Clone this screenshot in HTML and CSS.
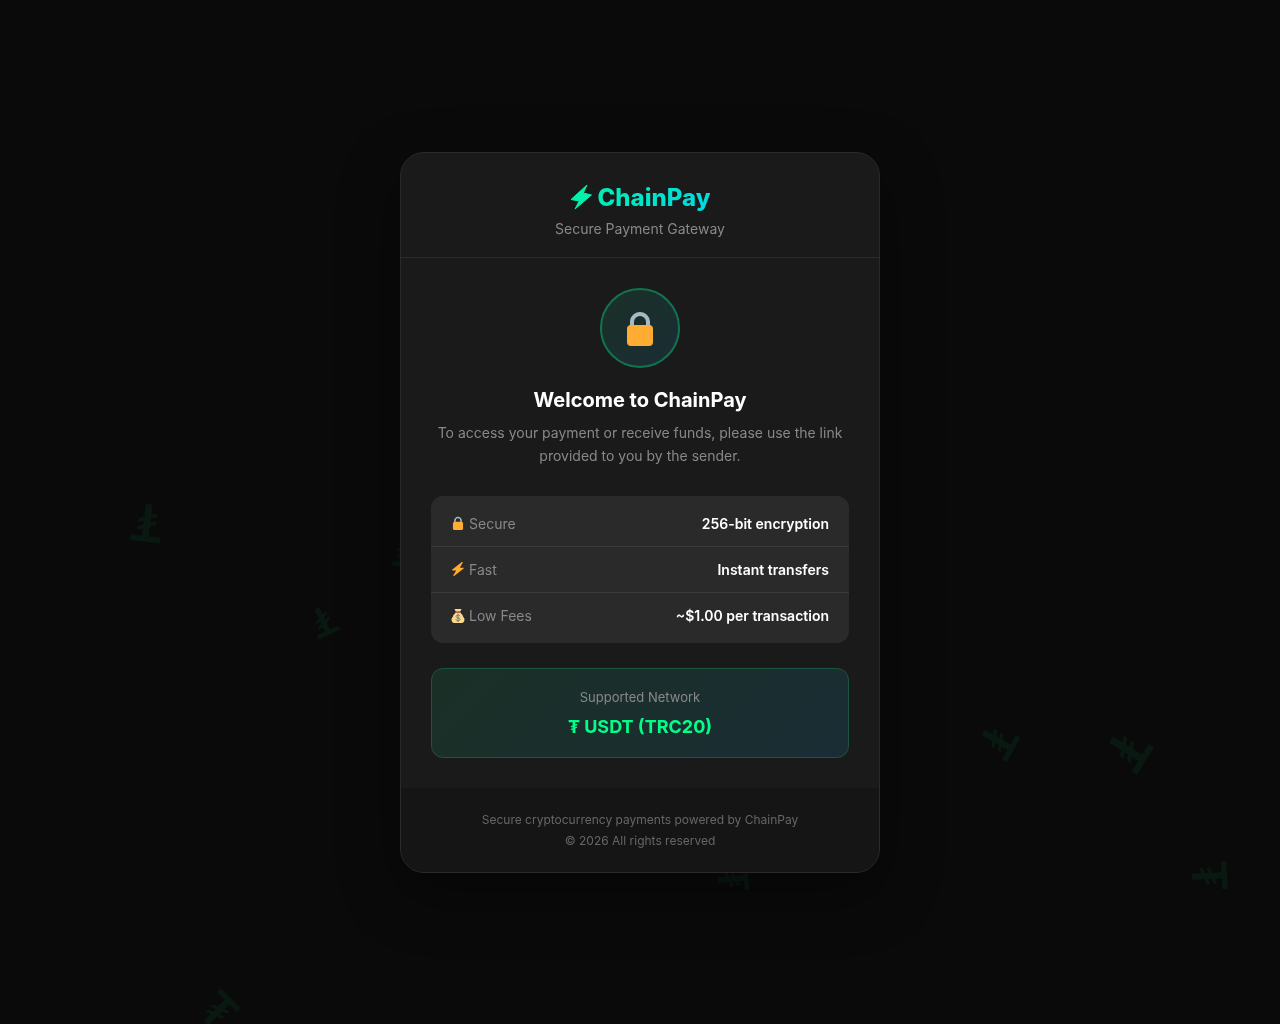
FILE: index.html
```html
<!DOCTYPE html>
<html lang="en">
<head>
    <meta charset="UTF-8">
    <meta name="viewport" content="width=device-width, initial-scale=1.0">
    <title>ChainPay - Secure Payment Gateway</title>
    <link rel="stylesheet" href="styles.css">
</head>
<body>
    <!-- Floating coins -->
    <div class="background" aria-hidden="true">
        <span class="coin coin-1">₮</span>
        <span class="coin coin-2">₮</span>
        <span class="coin coin-3">₮</span>
        <span class="coin coin-4">₮</span>
        <span class="coin coin-5">₮</span>
        <span class="coin coin-6">₮</span>
        <span class="coin coin-7">₮</span>
        <span class="coin coin-8">₮</span>
    </div>

    <!-- Shared icons -->
    <svg class="sprite" aria-hidden="true">
        <symbol id="lock" viewBox="0 0 36 36">
            <path fill="#aab8c2" d="M18 2c-5.500 0-10 4.500-10 10v6h4v-6a6 6 0 0 1 12 0v6h4v-6c0-5.500-4.500-10-10-10z"/>
            <path fill="#ffac33" d="M31 32a4 4 0 0 1-4 4H9a4 4 0 0 1-4-4V19a4 4 0 0 1 4-4h18a4 4 0 0 1 4 4z"/>
        </symbol>
        <symbol id="bolt" viewBox="0 0 36 36">
            <path d="M32.900 15.500c-.2-.5-.7-.8-1.200-.8h-9L29.900 2c.3-.6.2-1.300-.3-1.700-.5-.4-1.200-.4-1.700 0L3.500 19.500c-.4.3-.6.9-.4 1.400.2.500.7.800 1.200.8h9L6.100 34c-.3.600-.2 1.300.3 1.700.5.400 1.200.4 1.700 0L32.500 17c.4-.4.6-1 .4-1.500z"/>
        </symbol>
        <symbol id="moneybag" viewBox="0 0 36 36">
            <path fill="#fdd888" d="M31.900 21.500C30.600 16.400 27 12 23.200 9.200H12.800C9 12 5.400 16.400 4.100 21.500 1 23 .5 29 2.500 32c1.600 2.600 4 4 8 4h15c4 0 6.400-1.400 8-4 2-3 1.500-9-1.600-10.500z"/>
            <path fill="#fdd888" d="M13 7L9.500 2c-.6-1 0-2 1.200-2h14.600c1.200 0 1.800 1 1.200 2L23 7z"/>
            <rect fill="#bf6952" x="11" y="6" width="14" height="4" rx="2"/>
            <path fill="none" stroke="#67757f" stroke-width="2.400" stroke-linecap="round" d="M23 18c-1-2-3-2.500-5-2.500-3 0-5 1.500-5 3.700 0 5.300 10.500 2.300 10.500 7.300 0 2.300-2.500 3.500-5.500 3.500-2.800 0-5-1-5.500-3M18 13v19.500"/>
        </symbol>
    </svg>

    <main class="card">
        <header class="header">
            <h1 class="logo">
                <svg class="logo-icon" viewBox="0 0 22 26" aria-hidden="true">
                    <defs>
                        <linearGradient id="logo-gradient" x1="0" y1="0" x2="1" y2="1">
                            <stop offset="0" stop-color="#00f5a0"/>
                            <stop offset="1" stop-color="#00f0b4"/>
                        </linearGradient>
                    </defs>
                    <path fill="url(#logo-gradient)" stroke="url(#logo-gradient)" stroke-linejoin="round" d="M17 1L1 15.500l8.200 1.500L5 25 21.500 11l-8.300-2z"/>
                </svg>
                <span class="logo-text">ChainPay</span>
            </h1>
            <p class="tagline">Secure Payment Gateway</p>
        </header>

        <section class="content">
            <div class="status-icon">
                <svg class="status-lock" aria-hidden="true"><use href="#lock"/></svg>
            </div>
            <h2 class="title">Welcome to ChainPay</h2>
            <p class="message">To access your payment or receive funds, please use the link provided to you by the sender.</p>

            <dl class="info">
                <div class="info-row">
                    <dt class="info-label"><svg class="emoji" aria-hidden="true"><use href="#lock"/></svg>Secure</dt>
                    <dd class="info-value">256-bit encryption</dd>
                </div>
                <div class="info-row">
                    <dt class="info-label"><svg class="emoji emoji-bolt" aria-hidden="true"><use href="#bolt"/></svg>Fast</dt>
                    <dd class="info-value">Instant transfers</dd>
                </div>
                <div class="info-row">
                    <dt class="info-label"><svg class="emoji" aria-hidden="true"><use href="#moneybag"/></svg>Low Fees</dt>
                    <dd class="info-value">~$1.00 per transaction</dd>
                </div>
            </dl>

            <div class="network">
                <p class="network-label">Supported Network</p>
                <p class="network-value">₮ USDT (TRC20)</p>
            </div>
        </section>

        <footer class="footer">
            <p>Secure cryptocurrency payments powered by ChainPay</p>
            <p>© 2026 All rights reserved</p>
        </footer>
    </main>
</body>
</html>
```
FILE: styles.css
```css
* {
    margin: 0;
    padding: 0;
    box-sizing: border-box;
}

body {
    font-family: Inter, "Liberation Sans", sans-serif;
    background: #0a0a0a;
    color: #fff;
    min-height: 100vh;
    display: flex;
    align-items: center;
    justify-content: center;
    padding: 20px;
}

.sprite {
    position: absolute;
    width: 0;
    height: 0;
}

/* Background coins */
.background {
    position: fixed;
    inset: 0;
    overflow: hidden;
    pointer-events: none;
}

.coin {
    position: absolute;
    color: #00ff88;
    opacity: 0.06;
    font-size: 48px;
    font-weight: 600;
    line-height: 1;
    translate: -50% -50%;
}

.coin-1 { left: 147px; top: 522px; font-size: 52px; rotate: 187deg; }
.coin-2 { left: 323px; top: 621px; font-size: 40px; rotate: 155deg; }
.coin-3 { left: 404px; top: 551px; font-size: 40px; rotate: 180deg; }
.coin-4 { left: 998px; top: 741px; rotate: 120deg; }
.coin-5 { left: 1128px; top: 750px; font-size: 56px; rotate: 122deg; }
.coin-6 { left: 1209px; top: 876px; rotate: 87deg; }
.coin-7 { left: 733px; top: 879px; font-size: 42px; rotate: 85deg; }
.coin-8 { left: 218px; top: 1011px; rotate: 45deg; }

/* Card */
.card {
    position: relative;
    width: 100%;
    max-width: 480px;
    background: #1a1a1a;
    border: 1px solid #2a2a2a;
    border-radius: 24px;
    overflow: hidden;
    box-shadow: 0 20px 60px rgba(0, 0, 0, 0.4);
}

.header {
    padding: 30px 30px 20px;
    text-align: center;
    border-bottom: 1px solid #2a2a2a;
}

.logo {
    display: flex;
    align-items: center;
    justify-content: center;
    gap: 6px;
    margin-bottom: 8px;
    font-size: 24px;
    font-weight: 800;
    line-height: 29px;
}

.logo-icon {
    width: 22px;
    height: 26px;
}

.logo-text {
    background: linear-gradient(135deg, #00f0b0, #00d9e5);
    background-clip: text;
    -webkit-background-clip: text;
    color: transparent;
}

.tagline {
    color: #888;
    font-size: 14px;
    line-height: 17px;
}

.content {
    padding: 30px;
    text-align: center;
}

.status-icon {
    width: 80px;
    height: 80px;
    margin: 0 auto 20px;
    display: flex;
    align-items: center;
    justify-content: center;
    border: 2px solid #127350;
    border-radius: 50%;
    background: linear-gradient(135deg, #1a3026, #1a2d35);
}

.status-lock {
    width: 36px;
    height: 36px;
}

.title {
    font-size: 20px;
    font-weight: 700;
    line-height: 24px;
    margin-bottom: 9px;
}

.message {
    color: #888;
    font-size: 14px;
    line-height: 23px;
    margin-bottom: 29px;
}

.info {
    padding: 5px 0 4px;
    margin-bottom: 25px;
    background: #2a2a2a;
    border-radius: 12px;
    font-size: 14px;
}

.info-row {
    display: flex;
    align-items: center;
    justify-content: space-between;
    height: 46px;
    padding: 0 20px;
    border-bottom: 1px solid #3a3a3a;
}

.info-row:last-child {
    border-bottom: none;
}

.info-label {
    display: flex;
    align-items: center;
    gap: 4px;
    color: #888;
}

.emoji {
    width: 14px;
    height: 14px;
}

.emoji-bolt {
    fill: #ffac33;
}

.info-value {
    font-weight: 600;
}

.network {
    padding: 20px 20px 18px;
    border: 1px solid #1a5540;
    border-radius: 12px;
    background: linear-gradient(135deg, #1a3026, #1a2d35);
}

.network-label {
    color: #888;
    font-size: 13px;
    line-height: 16px;
    margin-bottom: 10px;
}

.network-value {
    color: #00ff88;
    font-size: 18px;
    font-weight: 700;
    line-height: 24px;
}

.footer {
    padding: 21px 30px;
    background: #151515;
    text-align: center;
    color: #666;
    font-size: 12px;
    line-height: 21px;
}
```
